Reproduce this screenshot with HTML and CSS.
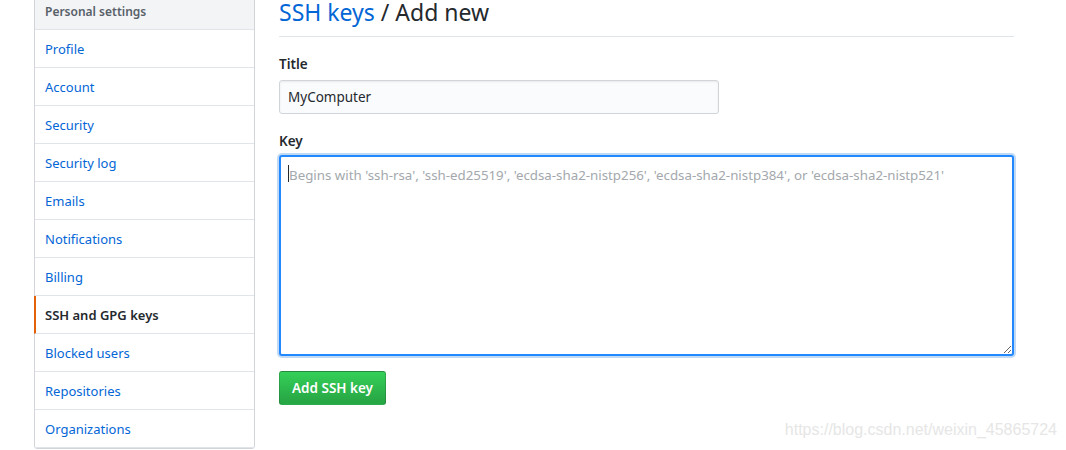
FILE: index.html
```html
<!DOCTYPE html>
<html>
<head>
<meta charset="utf-8">
<link rel="stylesheet" href="styles.css">
</head>
<body>
<div class="layout">
  <nav class="menu">
    <div class="menu-heading">Personal settings</div>
    <a class="menu-item">Profile</a>
    <a class="menu-item">Account</a>
    <a class="menu-item">Security</a>
    <a class="menu-item">Security log</a>
    <a class="menu-item">Emails</a>
    <a class="menu-item">Notifications</a>
    <a class="menu-item">Billing</a>
    <a class="menu-item selected">SSH and GPG keys</a>
    <a class="menu-item">Blocked users</a>
    <a class="menu-item">Repositories</a>
    <a class="menu-item">Organizations</a>
  </nav>
  <main class="content">
    <h2 class="subhead"><a class="crumb">SSH keys</a> / Add new</h2>
    <form class="form">
      <label class="label">Title</label>
      <input class="input" type="text" value="MyComputer">
      <label class="label key-label">Key</label>
      <div class="textarea-wrap">
        <textarea class="textarea" placeholder="Begins with 'ssh-rsa', 'ssh-ed25519', 'ecdsa-sha2-nistp256', 'ecdsa-sha2-nistp384', or 'ecdsa-sha2-nistp521'"></textarea>
        <span class="caret"></span>
      </div>
      <div class="actions"><button type="button" class="btn">Add SSH key</button></div>
    </form>
  </main>
</div>
<div class="watermark">https://blog.csdn.net/weixin_45865724</div>
</body>
</html>
```
FILE: styles.css
```css
html, body {
  margin: 0;
  padding: 0;
  background: #fff;
  overflow: hidden;
  height: 450px;
}
body {
  font-family: "Noto Sans", "Open Sans", sans-serif;
  font-size: 14px;
  color: #24292e;
  position: relative;
}
.layout {
  display: flex;
  align-items: flex-start;
  margin-top: -8px;
  padding-left: 34px;
  gap: 24px;
}
.menu {
  width: 221px;
  flex: none;
  border: 1px solid #d1d5da;
  border-radius: 3px;
  box-sizing: border-box;
  display: flex;
  flex-direction: column;
}
.menu-heading {
  height: 37px;
  box-sizing: border-box;
  padding: 0 10px;
  line-height: 37px;
  background: #f3f4f6;
  border-bottom: 1px solid #e1e4e8;
  color: #586069;
  font-weight: 600;
  font-size: 12px;
}
.menu-item {
  height: 38px;
  box-sizing: border-box;
  line-height: 37px;
  padding: 1px 10px 0;
  border-bottom: 1px solid #e1e4e8;
  color: #0366d6;
  font-size: 13px;
  text-decoration: none;
}
.menu-item.selected {
  color: #24292e;
  font-weight: 600;
  border-left: 2px solid #e36209;
  margin-left: -1px;
  padding-left: 9px;
}
.content {
  width: 735px;
  flex: none;
  padding-top: 8px;
}
.subhead {
  margin: 0;
  font-size: 23px;
  font-weight: 400;
  line-height: 26px;
  padding: 0 0 11px 0;
  border-bottom: 1px solid #e1e4e8;
  margin-top: -1px;
}
.crumb {
  color: #0366d6;
  text-decoration: none;
}
.form {
  display: flex;
  flex-direction: column;
  align-items: flex-start;
}
.label {
  font-weight: 600;
  font-size: 13.5px;
  line-height: 20px;
  margin-top: 17px;
  margin-bottom: 6px;
}
.key-label {
  margin-top: 17px;
  margin-bottom: 4px;
}
.input {
  width: 440px;
  height: 34px;
  box-sizing: border-box;
  padding: 0 8px;
  font-family: inherit;
  font-size: 13.5px;
  color: #24292e;
  background: #fafbfc;
  border: 1px solid #d1d5da;
  border-radius: 3px;
  outline: none;
  box-shadow: inset 0 1px 2px rgba(27,31,35,0.075);
}
.textarea-wrap {
  position: relative;
  width: 735px;
  height: 201px;
}
.textarea {
  width: 100%;
  height: 100%;
  box-sizing: border-box;
  padding: 8px 8px;
  font-family: inherit;
  font-size: 13.3px;
  line-height: 20px;
  border: 2px solid #2188ff;
  border-radius: 3px;
  outline: none;
  box-shadow: 0 0 0 2px rgba(3,102,214,0.25);
  resize: vertical;
  display: block;
}
.textarea::placeholder {
  color: #a3a8ad;
}
.caret {
  position: absolute;
  left: 9px;
  top: 10px;
  width: 1px;
  height: 17px;
  background: #24292e;
}
.actions {
  margin-top: 15px;
}
.btn {
  height: 34px;
  padding: 0 12px;
  font-family: inherit;
  font-size: 13.5px;
  font-weight: 600;
  color: #fff;
  background: linear-gradient(#34d058, #28a745 90%);
  border: 1px solid rgba(27,31,35,0.2);
  border-radius: 3px;
}
.watermark {
  position: absolute;
  right: 9px;
  top: 421px;
  font-family: "Liberation Sans", Arial, sans-serif;
  font-size: 16px;
  color: #e6e6e6;
}
```
